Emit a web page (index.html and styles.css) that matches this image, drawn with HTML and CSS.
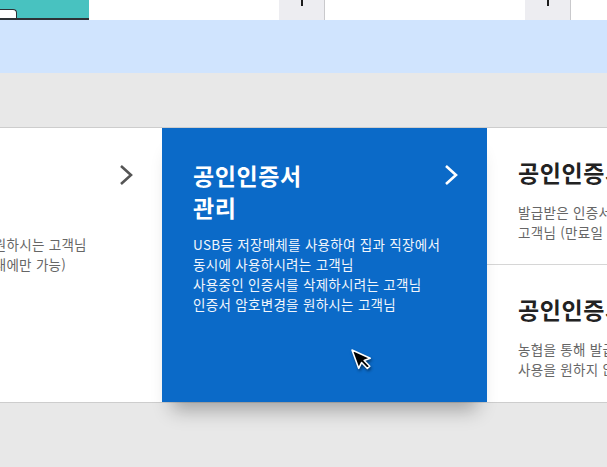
FILE: index.html
```html
<!DOCTYPE html>
<html lang="ko">
<head>
<meta charset="utf-8">
<link rel="stylesheet" href="styles.css">
</head>
<body>
<div class="topbar">
  <div class="teal"><span class="tab"></span></div>
  <div class="field w1"></div>
  <div class="btn"><span class="tick"></span></div>
  <div class="field w2"></div>
  <div class="btn"><span class="tick"></span></div>
  <div class="field"></div>
</div>
<div class="band"></div>
<div class="gap"></div>
<div class="cards">
  <div class="track">
    <div class="card left">
      <div class="head">
        <h3 class="title">인증서<br>등록</h3>
        <svg class="chev" width="14" height="22" viewBox="0 0 14 22"><path d="M2 2 L12 11 L2 20" fill="none" stroke="#555" stroke-width="2.6"/></svg>
      </div>
      <p class="desc">타기관 인증서 등록을 원하시는 고객님<br>(유효기간 만료 3일 이내에만 가능)</p>
    </div>
    <div class="card blue">
      <div class="head">
        <h3 class="title">공인인증서<br>관리</h3>
        <svg class="chev" width="14" height="22" viewBox="0 0 14 22"><path d="M2 2 L12 11 L2 20" fill="none" stroke="#fff" stroke-width="2.6"/></svg>
      </div>
      <p class="desc">USB등 저장매체를 사용하여 집과 직장에서<br>동시에 사용하시려는 고객님<br>사용중인 인증서를 삭제하시려는 고객님<br>인증서 암호변경을 원하시는 고객님</p>
    </div>
    <div class="col">
      <div class="card small">
        <h3 class="title">공인인증서 갱신</h3>
        <p class="desc">발급받은 인증서의 갱신을 원하시는<br>고객님 (만료일 1개월 전부터 가능)</p>
      </div>
      <div class="card small">
        <h3 class="title">공인인증서 폐지</h3>
        <p class="desc">농협을 통해 발급받은 인증서의<br>사용을 원하지 않는 고객님</p>
      </div>
    </div>
  </div>
  <svg class="cursor" width="30" height="32" viewBox="0 0 30 32">
    <g transform="translate(4 2) rotate(-20) scale(1.3)">
      <path d="M0 0 L0 15 L3.6 11.6 L6.2 17.4 L8.6 16.4 L6 10.8 L11 10.8 Z" fill="#000" stroke="#fff" stroke-width="1.2" stroke-linejoin="round"/>
    </g>
  </svg>
</div>
</body>
</html>
```

FILE: styles.css
```css
* { box-sizing: border-box; }
html, body { margin: 0; padding: 0; }
body {
  width: 607px;
  height: 467px;
  overflow: hidden;
  background: #e8e8e8;
  font-family: "Noto Sans CJK KR", "Noto Sans", sans-serif;
}
.topbar {
  display: flex;
  height: 20px;
  background: #fff;
}
.teal {
  width: 89px;
  background: #48c2c0;
  border-bottom: 2px solid #2d3236;
  position: relative;
}
.tab {
  position: absolute;
  left: -2px;
  bottom: 0;
  width: 19px;
  height: 9px;
  background: #fff;
  border: 1.5px solid #2d3236;
  border-bottom: none;
  border-radius: 0 4px 0 0;
}
.field { flex: 1; }
.field.w1 { flex: 0 0 190px; }
.field.w2 { flex: 0 0 200px; }
.btn {
  width: 46px;
  background: #ededf1;
  border-right: 1px solid #c9c9cc;
  display: flex;
  justify-content: center;
}
.tick {
  width: 2px;
  height: 6px;
  background: #1d1d1d;
}
.band {
  height: 53px;
  background: #d0e4fe;
}
.gap { height: 54px; }
.cards {
  position: relative;
  height: 276px;
  background: #fff;
  border-top: 1px solid #cdcdcd;
  border-bottom: 1px solid #cdcdcd;
}
.track {
  display: flex;
  height: 274px;
  margin-left: -164px;
}
.card {
  flex: 0 0 326px;
  padding: 31px 29px 0 31px;
}
.card.blue {
  flex-basis: 325px;
  background: #0b6ac8;
  color: #fff;
  box-shadow: 0 18px 18px -10px rgba(0,0,0,0.3);
  position: relative;
  z-index: 1;
}
.head {
  display: flex;
  justify-content: space-between;
  align-items: flex-start;
}
.chev { margin-top: 5px; flex: none; }
.title {
  margin: 0;
  font-size: 23px;
  letter-spacing: 0.6px;
  line-height: 32px;
  font-weight: 700;
  color: #222;
  white-space: nowrap;
}
.blue .title { color: #fff; }
.desc {
  margin: 11px 0 0;
  font-size: 13.5px;
  letter-spacing: 0.3px;
  line-height: 20px;
  color: #666;
  white-space: nowrap;
}
.blue .desc { color: #f2f6fc; }
.col {
  flex: 0 0 326px;
  display: flex;
  flex-direction: column;
}
.card.small {
  flex: 0 0 137px;
  padding-top: 28px;
}
.card.small:first-child { border-bottom: 1px solid #d6d6d6; }
.small .desc { margin-top: 14px; }
.cursor {
  position: absolute;
  left: 348px;
  top: 220px;
  z-index: 2;
  filter: drop-shadow(1px 2px 1.5px rgba(0,0,0,0.45));
}
```
